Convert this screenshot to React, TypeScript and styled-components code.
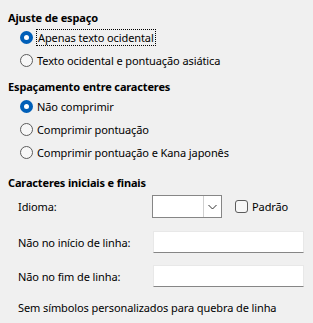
import styled, { createGlobalStyle } from "styled-components";

const GlobalStyles = createGlobalStyle`
  html, body {
    margin: 0;
    padding: 0;
    background: #f0f0f0;
  }
  body {
    font-family: "Noto Sans", "Open Sans", sans-serif;
    font-size: 11px;
    letter-spacing: -0.1px;
    color: #000;
  }
`;

const Page = styled.div`
  width: 313px;
  height: 323px;
  box-sizing: border-box;
  padding: 10px 9px 0 8px;
  display: flex;
  flex-direction: column;
`;

const Heading = styled.div<{ $gap?: number }>`
  font-weight: 700;
  height: 16px;
  line-height: 16px;
  margin-top: ${(p) => p.$gap ?? 0}px;
  letter-spacing: -0.15px;
`;

const RadioList = styled.div`
  display: flex;
  flex-direction: column;
  padding-left: 12px;
`;

const RadioRow = styled.label`
  height: 23px;
  display: flex;
  align-items: center;
  gap: 4px;
`;

const RadioMark = styled.span<{ $checked?: boolean }>`
  position: relative;
  width: 13px;
  height: 13px;
  box-sizing: border-box;
  border-radius: 50%;
  flex: none;
  ${(p) =>
    p.$checked
      ? `background: #005fb8; border: 4px solid #005fb8;`
      : `background: #f7f7f7; border: 1px solid #5c5c5c;`}
`;

const Dot = styled.span`
  position: absolute;
  inset: 0;
  border-radius: 50%;
  background: #fff;
`;

const FocusText = styled.span`
  outline: 1px dotted #000;
  padding: 0 1px;
`;

const Form = styled.div`
  display: grid;
  grid-template-columns: 134px 152px;
  padding-left: 10px;
  align-items: center;
`;

const ComboRow = styled.div`
  display: flex;
  align-items: center;
`;

const Combo = styled.div`
  width: 70px;
  height: 23px;
  box-sizing: border-box;
  background: #fff;
  border: 1px solid #868686;
  display: flex;
  justify-content: flex-end;
`;

const ComboButton = styled.div`
  width: 17px;
  border-left: 1px solid #d0d0d0;
  display: flex;
  align-items: center;
  justify-content: center;
`;

const Check = styled.span`
  width: 13px;
  height: 13px;
  box-sizing: border-box;
  border: 1px solid #5c5c5c;
  border-radius: 3px;
  background: #f7f7f7;
  margin-left: 13px;
  margin-right: 4px;
`;

const TextInput = styled.div`
  height: 22px;
  box-sizing: border-box;
  background: #fff;
  border: 1px solid #e8e8e8;
  border-bottom: 1px solid #868686;
  margin-left: 1px;
`;

const Note = styled.div`
  padding-left: 10px;
  height: 16px;
  line-height: 16px;
`;

const Spacer = styled.div<{ $h: number }>`
  grid-column: 1 / -1;
  height: ${(p) => p.$h}px;
`;

const App = () => {
  return (
    <>
      <GlobalStyles />
      <Page>
        <Heading>Ajuste de espaço</Heading>
        <RadioList>
          <RadioRow>
            <RadioMark $checked>
              <Dot />
            </RadioMark>
            <FocusText>Apenas texto ocidental</FocusText>
          </RadioRow>
          <RadioRow>
            <RadioMark />
            Texto ocidental e pontuação asiática
          </RadioRow>
        </RadioList>

        <Heading $gap={7}>Espaçamento entre caracteres</Heading>
        <RadioList>
          <RadioRow>
            <RadioMark $checked>
              <Dot />
            </RadioMark>
            Não comprimir
          </RadioRow>
          <RadioRow>
            <RadioMark />
            Comprimir pontuação
          </RadioRow>
          <RadioRow>
            <RadioMark />
            Comprimir pontuação e Kana japonês
          </RadioRow>
        </RadioList>

        <Heading $gap={11}>Caracteres iniciais e finais</Heading>
        <Spacer $h={4} />
        <Form>
          <div>Idioma:</div>
          <ComboRow>
            <Combo>
              <ComboButton>
                <svg width="9" height="6" viewBox="0 0 9 6">
                  <path d="M0.5 1 L4.5 5 L8.5 1" fill="none" stroke="#333" strokeWidth="1" />
                </svg>
              </ComboButton>
            </Combo>
            <Check />
            Padrão
          </ComboRow>
          <Spacer $h={13} />
          <div>Não no início de linha:</div>
          <TextInput />
          <Spacer $h={12} />
          <div>Não no fim de linha:</div>
          <TextInput />
        </Form>
        <Spacer $h={13} />
        <Note>Sem símbolos personalizados para quebra de linha</Note>
      </Page>
    </>
  );
};

export default App;
